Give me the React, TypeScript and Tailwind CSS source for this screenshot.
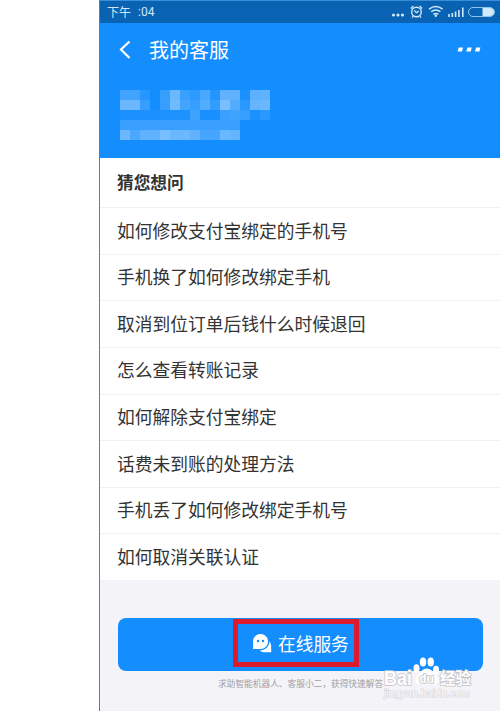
const questions = [
  '如何修改支付宝绑定的手机号',
  '手机换了如何修改绑定手机',
  '取消到位订单后钱什么时候退回',
  '怎么查看转账记录',
  '如何解除支付宝绑定',
  '话费未到账的处理方法',
  '手机丢了如何修改绑定手机号',
  '如何取消关联认证',
];

// Opacity (in %) of each 10px block of the masked account name
const mosaic = [
  [22, 22, 9, 0, 16, 42, 18, 12, 26, 8, 36, 36, 3, 34, 36],
  [42, 42, 16, 0, 16, 44, 22, 16, 30, 14, 48, 30, 10, 38, 42],
  [3, 3, 3, 3, 4, 4, 4, 20, 2, 2, 18, 20, 16, 3, 10],
  [18, 18, 18, 18, 18, 18, 18, 18, 18, 18, 18, 18, 0, 0, 0],
  [42, 26, 36, 36, 48, 42, 42, 36, 24, 24, 40, 38, 0, 0, 0],
];

function StatusBar() {
  return (
    <div className="h-[23px] bg-[#0963b2] border-t border-[#3b8ed8] flex items-center justify-between pl-[7px] pr-[5px] text-[#cfe9fb]">
      <div className="text-[12px] leading-none flex gap-[7px]">
        <span>下午</span>
        <span className="font-['Roboto']">:04</span>
      </div>
      <svg width="104" height="20" viewBox="0 0 104 20" fill="none" stroke="#cfe9fb">
        <g fill="#cfe9fb" stroke="none">
          <circle cx="2.5" cy="13" r="1.6" />
          <circle cx="7" cy="13" r="1.6" />
          <circle cx="11.5" cy="13" r="1.6" />
        </g>
        <circle cx="25.5" cy="10" r="4.8" strokeWidth="1.4" />
        <path d="M23.3 8.5l2.2 2.2 2.2-1.6M19.8 6.5l2.6-2.4M31.2 6.5l-2.6-2.4M22 14.5l-1 1M29 14.5l1 1" strokeWidth="1.3" />
        <path d="M38 7.1q6.8-5 13.6 0M40.2 9.7q4.6-3.4 9.2 0M42.3 12.3q2.5-1.8 5 0" strokeWidth="1.5" />
        <circle cx="44.8" cy="13.8" r="1.2" fill="#cfe9fb" stroke="none" />
        <path d="M58 15v-3M61.3 15v-4M64.6 15v-5.5M67.9 15v-7M71.8 15V5.5" strokeWidth="1.6" />
        <rect x="77.5" y="5.5" width="26" height="9" rx="4.5" stroke="#8fc4ec" />
        <path d="M91.5 6h8q3.5.5 3.5 4t-3.5 4h-8z" fill="#cfe9fb" stroke="none" />
      </svg>
    </div>
  );
}

function Header() {
  return (
    <header className="h-[135px] bg-[#148eff] text-white">
      <div className="h-[53px] flex items-center pl-[18px] pr-[19px]">
        <svg width="14" height="20" viewBox="0 0 14 20" fill="none" stroke="currentColor" strokeWidth="2.2">
          <path d="M11.5 1.5L3 9.5l8.5 8.5" />
        </svg>
        <h1 className="ml-[17px] text-[20px] leading-none">我的客服</h1>
        <svg className="ml-auto" width="24" height="6" viewBox="0 0 24 6" fill="currentColor">
          <path d="M1.8.5H6l-1 4H.5zM10.5.5h4.2l-1 4H9.2zM19.200.5h4.200l-1 4h-4.500z" />
        </svg>
      </div>
      <div className="w-[150px] ml-[20px] mt-[14px] grid grid-cols-15">
        {mosaic.flat().map((alpha, i) => (
          <div key={i} className="h-[10px] bg-[#e8f4ff]" style={{ opacity: alpha / 100 }} />
        ))}
      </div>
    </header>
  );
}

function ChatIcon() {
  return (
    <svg width="20" height="20" viewBox="0 0 20 20" fill="#fff" className="shrink-0">
      <path d="M1 16V8.5C1 4.200 4.300 1 8.500 1S16 4.300 16 8.500 12.700 16 8.500 16z" />
      <path d="M17.400 8c1.200 2 1.800 3.700 1.800 6v5.200H12c-2 0-3.300-.7-4.200-1.900 5.500.2 9.800-3.800 9.600-9.300z" />
      <circle cx="6" cy="8" r="1.2" fill="#148eff" />
      <circle cx="11" cy="8" r="1.2" fill="#148eff" />
    </svg>
  );
}

function Watermark() {
  return (
    <div className="absolute left-[281px] top-[656px] w-[96px] h-[48px]">
      <svg width="96" height="48" viewBox="0 0 96 48" fontFamily="Liberation Sans, Noto Sans CJK SC, sans-serif">
        <g fill="#fff">
          <ellipse cx="35.5" cy="12.5" rx="3" ry="4.2" />
          <ellipse cx="42" cy="6" rx="3.2" ry="4.5" />
          <ellipse cx="49.7" cy="6" rx="3.2" ry="4.5" />
          <ellipse cx="55" cy="14" rx="3" ry="4.2" />
          <path d="M45.5 12.5c-4 0-6 4-9 7-4 4-1 10 3 9h12c5 1 8-5 4-9-3-3-5-7-10-7z" />
        </g>
        <g fill="#fff" stroke="#c2c2c8" strokeWidth="1.6" paintOrder="stroke" fontWeight="bold">
          <text x="3" y="29" fontSize="20" textLength="28" lengthAdjust="spacingAndGlyphs">Bai</text>
          <text x="38" y="27" fontSize="12.5" textLength="15" lengthAdjust="spacingAndGlyphs">du</text>
          <text x="59" y="28" fontSize="15.5">经验</text>
        </g>
        <text x="3" y="41" fontSize="10.5" textLength="86" fill="#fbfbfd" stroke="#d6d6dc" strokeWidth="1.2" paintOrder="stroke">jingyan.baidu.com</text>
      </svg>
    </div>
  );
}

export default function App() {
  return (
    <div className="w-[500px] h-[711px] bg-white pl-[99px] overflow-hidden font-['Noto_Sans_CJK_SC',sans-serif]">
      <div className="relative h-full border-l border-[#77777a] flex flex-col">
        <StatusBar />
        <Header />
        <main className="text-[#333]">
          <h2 className="h-[49px] flex items-center pl-[17px] text-[16.7px] font-bold">猜您想问</h2>
          <ul>
            {questions.map((question) => (
              <li key={question} className="h-[46.65px] border-t border-[#f2f2f2] flex items-center pl-[17px] pb-[2px] text-[17.75px]">
                {question}
              </li>
            ))}
          </ul>
        </main>
        <footer className="flex-1 bg-[#f4f4f8] px-[18px] pt-[38px]">
          <button className="w-[365px] h-[53px] rounded-[8px] bg-[#148eff] text-white flex items-start pt-px pl-[115px]">
            <span className="w-[126px] h-[48px] border-[5px] border-[#dc1c2c] flex items-center pl-[14px] gap-[6px] whitespace-nowrap text-[17.7px]">
              <ChatIcon />
              在线服务
            </span>
          </button>
          <p className="mt-[6px] pl-[100px] text-[8.7px] leading-[14px] text-[#a0a0a4] whitespace-nowrap">求助智能机器人、客服小二，获得快速解答</p>
        </footer>
        <Watermark />
      </div>
    </div>
  );
}
